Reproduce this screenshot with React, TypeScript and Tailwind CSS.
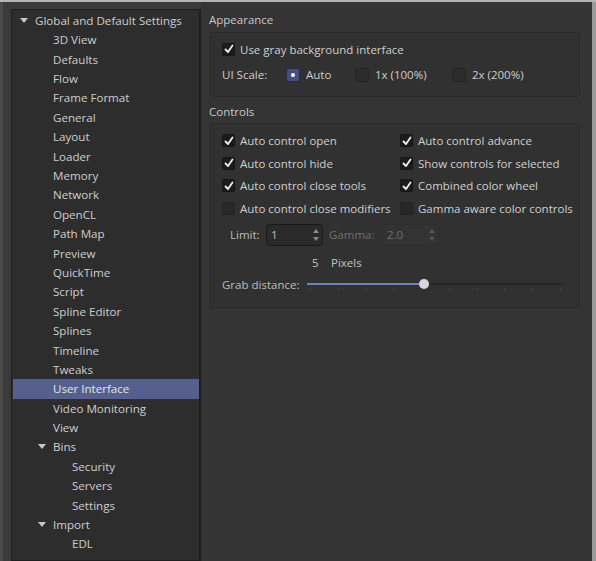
import React from "react";

const font = { fontFamily: '"Open Sans", "Noto Sans", sans-serif' };

function Tri() {
  return (
    <svg width="8" height="6" viewBox="0 0 8 6" className="mr-[7px]">
      <path d="M0 0 L8 0 L4 5 Z" fill="#c8c8c8" />
    </svg>
  );
}

function Check({ on }: { on: boolean }) {
  return (
    <span
      className={
        "inline-flex h-[13px] w-[13px] shrink-0 items-center justify-center rounded-[2px] border " +
        (on ? "border-[#161616] bg-[#1c1c1c]" : "border-[#222] bg-[#282828]")
      }
    >
      {on && (
        <svg width="10" height="10" viewBox="0 0 10 10">
          <path d="M1.5 5.5 L4 8 L8.5 1.5" stroke="#f0f0f0" strokeWidth="1.8" fill="none" strokeLinecap="round" strokeLinejoin="round" />
        </svg>
      )}
    </span>
  );
}

function CheckRow({ on, label }: { on: boolean; label: string }) {
  return (
    <div className="flex h-[22.5px] items-center gap-[5px] whitespace-nowrap">
      <Check on={on} />
      <span className="text-[11.5px] text-[#cfcfcf]">{label}</span>
    </div>
  );
}

function Spin({ value, disabled }: { value: string; disabled?: boolean }) {
  return (
    <div
      className={
        "flex h-[22px] w-[57px] items-center justify-between rounded-[3px] border pl-[4px] pr-[2px] " +
        (disabled ? "border-[#2e2e2e] bg-[#333] text-[#707070]" : "border-[#1a1a1a] bg-[#2a2a2a] text-[#bdbdbd]")
      }
    >
      <span className="text-[11.5px]">{value}</span>
      <svg width="8" height="16" viewBox="0 0 8 16">
        <path d="M1 6 L4 2 L7 6 Z" fill={disabled ? "#555" : "#8a8a8a"} />
        <path d="M1 10 L4 14 L7 10 Z" fill={disabled ? "#555" : "#8a8a8a"} />
      </svg>
    </div>
  );
}

const children = [
  "3D View", "Defaults", "Flow", "Frame Format", "General", "Layout", "Loader", "Memory", "Network",
  "OpenCL", "Path Map", "Preview", "QuickTime", "Script", "Spline Editor", "Splines", "Timeline",
  "Tweaks", "User Interface", "Video Monitoring", "View",
];

function Row({ label, indent, tri, sel }: { label: string; indent: number; tri?: boolean; sel?: boolean }) {
  return (
    <div
      className={"flex h-[19.4px] items-center whitespace-nowrap text-[11.6px] " + (sel ? "bg-[#56608f] text-[#e4e6ee]" : "text-[#cdcdcd]")}
      style={{ paddingLeft: indent }}
    >
      {tri && <Tri />}
      <span className="leading-none">{label}</span>
    </div>
  );
}

export default function App() {
  return (
    <div className="flex h-[561px] w-[596px] flex-col overflow-hidden bg-[#3a3a3a]" style={font}>
      <div className="h-[2px] bg-[#b4b4b4]" />
      <div className="flex flex-1 overflow-hidden">
        <div className="flex w-[201px] shrink-0 flex-col border-l-[3px] border-[#4a4a4a] pl-[8px] pt-[7px]">
          <div className="flex-1 overflow-hidden rounded-tl-[2px] border border-r-2 border-[#1e1e1e] bg-[#2d2d2d] pt-[1px] pl-[1px]">
            <Row label="Global and Default Settings" indent={7} tri />
            {children.map((c) => (
              <Row key={c} label={c} indent={40} sel={c === "User Interface"} />
            ))}
            <Row label="Bins" indent={25} tri />
            <Row label="Security" indent={59} />
            <Row label="Servers" indent={59} />
            <Row label="Settings" indent={59} />
            <Row label="Import" indent={25} tri />
            <Row label="EDL" indent={59} />
          </div>
        </div>
        <div className="flex flex-1 flex-col bg-[#343434] pl-[8px] pr-[12px] pt-[10px]">
          <div className="text-[11.5px] leading-[16px] text-[#c9c9c9]">Appearance</div>
          <div className="mt-[4px] ml-[1px] rounded-[3px] border border-[#2a2a2a] bg-[#313131] px-[11px] pt-[5px] pb-[10px]">
            <CheckRow on label="Use gray background interface" />
            <div className="mt-[3px] flex h-[22px] items-center text-[11.5px] text-[#cfcfcf]">
              <span className="w-[64px]">UI Scale:</span>
              <span className="flex h-[14px] w-[14px] items-center justify-center rounded-[3px] border border-[#252a45] bg-[#47507e]">
                <span className="h-[4px] w-[4px] rounded-full bg-white" />
              </span>
              <span className="ml-[6px] w-[49px]">Auto</span>
              <span className="h-[14px] w-[14px] rounded-[3px] border border-[#232323] bg-[#2c2c2c]" />
              <span className="ml-[6px] w-[77px]">1x (100%)</span>
              <span className="h-[14px] w-[14px] rounded-[3px] border border-[#232323] bg-[#2c2c2c]" />
              <span className="ml-[6px]">2x (200%)</span>
            </div>
          </div>
          <div className="mt-[7px] text-[11.5px] leading-[16px] text-[#c9c9c9]">Controls</div>
          <div className="mt-[3px] ml-[1px] rounded-[3px] border border-[#2a2a2a] bg-[#313131] pl-[11px] pr-[4px] pt-[6px] pb-[13px]">
            <div className="grid grid-cols-[178px_1fr]">
              <CheckRow on label="Auto control open" />
              <CheckRow on label="Auto control advance" />
              <CheckRow on label="Auto control hide" />
              <CheckRow on label="Show controls for selected" />
              <CheckRow on label="Auto control close tools" />
              <CheckRow on label="Combined color wheel" />
              <CheckRow on={false} label="Auto control close modifiers" />
              <CheckRow on={false} label="Gamma aware color controls" />
            </div>
            <div className="mt-[4px] flex items-center pl-[8px] text-[11.5px]">
              <span className="w-[36px] text-[#bdbdbd]">Limit:</span>
              <Spin value="1" />
              <span className="ml-[6px] w-[53px] text-[#707070]">Gamma:</span>
              <Spin value="2.0" disabled />
            </div>
            <div className="mt-[8px] flex h-[18px] items-center pl-[90px] text-[11.5px] text-[#c4c4c4]">
              <span className="w-[19px]">5</span>
              <span>Pixels</span>
            </div>
            <div className="mt-[4px] flex h-[18px] items-center pr-[8px] text-[11.5px] text-[#bdbdbd]">
              <span className="w-[85px]">Grab distance:</span>
              <div className="relative h-[18px] flex-1">
                <div className="absolute left-0 top-[7px] h-[2px] w-[117px] bg-[#7580b4]" />
                <div className="absolute left-[117px] right-[4px] top-[7px] h-[2px] bg-[#262626]" />
                <div className="absolute left-[112px] top-[3px] h-[10px] w-[10px] rounded-full bg-[#d8d8d8]" />
                <div className="absolute left-[3px] right-[6px] top-[12px] flex justify-between">
                  {Array.from({ length: 10 }).map((_, i) => (
                    <span key={i} className="h-[3px] w-px bg-[#404040]" />
                  ))}
                </div>
              </div>
            </div>
          </div>
        </div>
        <div className="w-[4px] shrink-0 bg-[#9a9a9a]" />
      </div>
    </div>
  );
}
